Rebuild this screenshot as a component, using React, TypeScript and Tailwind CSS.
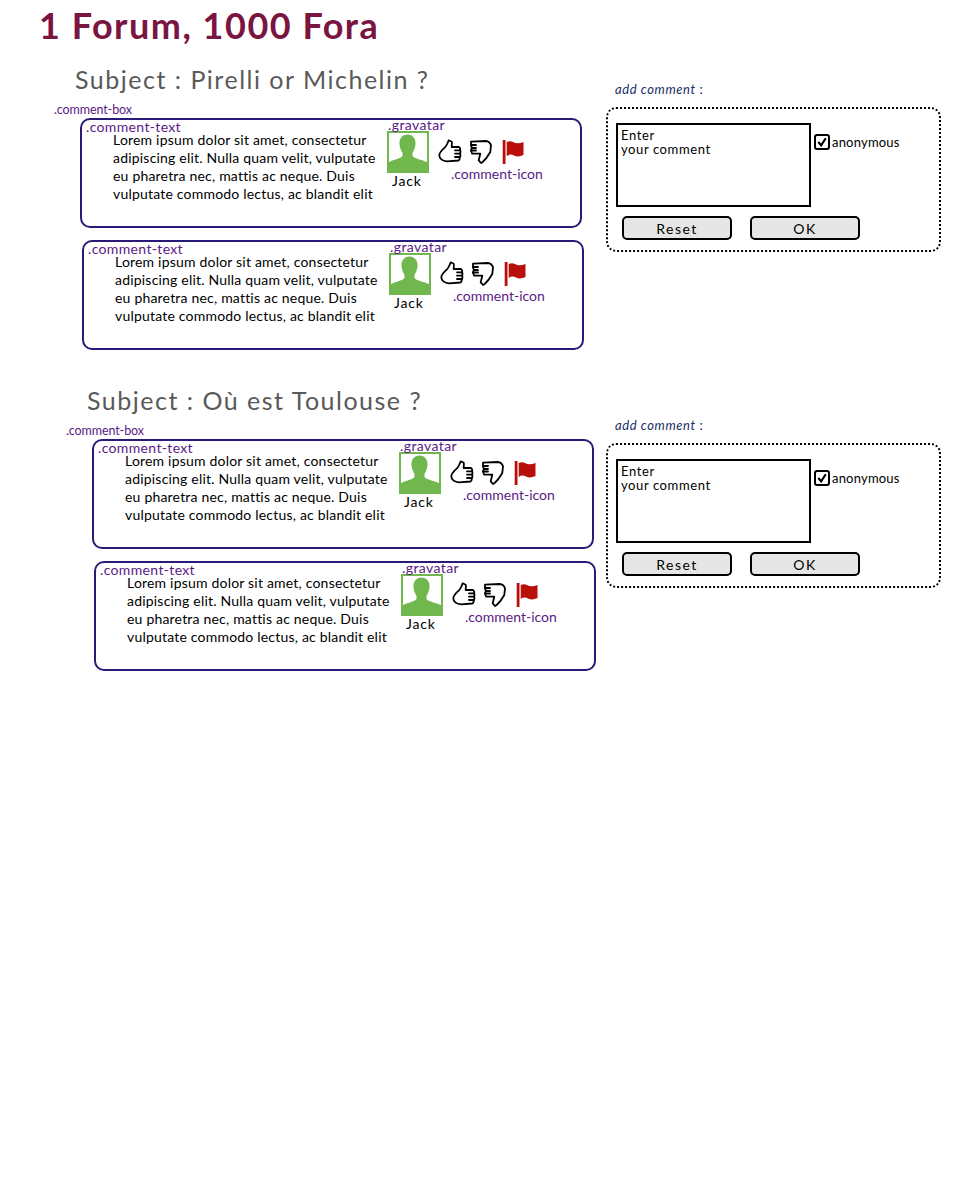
const font = "font-['Lato','Liberation_Sans',sans-serif]";

function ThumbUp() {
  return (
    <svg width="24" height="26" viewBox="0 0 24 26" fill="none" stroke="#000" strokeWidth="1.8" strokeLinejoin="round" strokeLinecap="round">
      <path d="M1.3 16 C1.5 13 5 10 7.3 8 C9 6 10 3.5 10.7 1.3 L13.7 2.7 C14.2 4.5 13.6 6.5 13.7 8 L21 8 Q22.6 9 22 11.3 Q23 13 22 14.6 Q23 16.5 21.8 18 Q22 20.5 20.5 21.5 L9 22.3 C5 22.3 1.2 20 1.3 16 Z" />
      <path d="M17 11.3 L22 11.3 M17 14.6 L22 14.6 M17 18 L21.8 18" />
    </svg>
  );
}

function ThumbDown() {
  return (
    <svg width="24" height="26" viewBox="0 0 24 26" fill="none" stroke="#000" strokeWidth="1.8" strokeLinejoin="round" strokeLinecap="round">
      <path d="M1 2.7 L16 2 C18 2 20.5 4 21 6.3 L20.3 13 C18 17 15 21 12.7 23 L11 24 L8.7 21.3 L10.3 14.7 L2.2 14.7 L1 11.5 L1.8 9 L1 6 Z" />
      <path d="M1 6 L6 6 M1.8 9 L6 9 M1 11.5 L6 11.5" />
    </svg>
  );
}

function Flag() {
  return (
    <svg width="24" height="26" viewBox="0 0 24 26" fill="#b80f0a">
      <rect x="0.7" y="1" width="2.8" height="24" />
      <path d="M4.7 3 Q8 1.5 11 3 Q15 5.5 21.5 3 L21.5 16 Q16 18.5 12 16.5 Q8 14.5 4.7 17 Z" />
    </svg>
  );
}

function Gravatar() {
  return (
    <div className="h-[42px] w-[42px] border-2 border-[#70b84e] bg-white">
      <svg viewBox="0 0 38 38" className="h-full w-full" fill="#70b84e">
        <path d="M18.5 1.5 C24 1.5 27 6 26.5 11 C26 16 24.5 18 23.5 20 L23.5 23 C25 25.5 32 26.5 38 29 L38 38 L0 38 L0 29 C5 26.5 12 25.5 13.5 23 L13.5 20 C12.5 18 11 16 10.5 11 C10 6 13 1.5 18.5 1.5 Z" />
      </svg>
    </div>
  );
}

function Comment({ className }: { className: string }) {
  return (
    <div className={`flex h-[110px] w-[502px] items-start rounded-[10px] border-2 border-[#2a1a78] ${className}`}>
      <div className="w-[305px] pl-[4px]">
        <div className="text-[14px] leading-[13px] tracking-[0.35px] text-[#5a1a86]">.comment-text</div>
        <p className="mt-[-2px] pl-[27px] text-[14px] leading-[18px] tracking-[0.2px] text-black whitespace-nowrap">
          Lorem ipsum dolor sit amet, consectetur
          <br />
          adipiscing elit. Nulla quam velit, vulputate
          <br />
          eu pharetra nec, mattis ac neque. Duis
          <br />
          vulputate commodo lectus, ac blandit elit
        </p>
      </div>
      <div className="mt-[-1px] w-[51px] shrink-0">
        <div className="pl-[1px] text-[14px] leading-[12px] tracking-[0.4px] text-[#5a1a86]">.gravatar</div>
        <Gravatar />
        <div className="pl-[5px] text-[14px] leading-[16px] tracking-[0.8px] text-black">Jack</div>
      </div>
      <div className="mt-[19px]">
        <div className="flex gap-[8px]">
          <ThumbUp />
          <ThumbDown />
          <Flag />
        </div>
        <div className="ml-[13px] mt-[1px] text-[14px] leading-[16px] whitespace-nowrap text-[#5a1a86]">.comment-icon</div>
      </div>
    </div>
  );
}

function AddComment({ className }: { className: string }) {
  return (
    <aside className={`w-[335px] shrink-0 ${className}`}>
      <div className="pl-[9px] text-[13px] leading-[16px] tracking-[0.6px] text-[#1c2f66]">
        <i>add comment</i> :
      </div>
      <div className="mt-[10px] h-[145px] w-[335px] rounded-[10px] border-2 border-dotted border-black pl-[8px] pt-[14px]">
        <div className="flex items-start gap-[3px]">
          <div className="h-[84px] w-[195px] border-2 border-black px-[3px] py-[3px] text-[13px] leading-[14px] tracking-[0.6px] text-black">
            Enter
            <br />
            your comment
          </div>
          <label className="mt-[11px] flex items-center gap-[2px] text-[13px] leading-[16px] tracking-[0.2px] text-black">
            <span className="flex h-[16px] w-[16px] items-center justify-center rounded-[3px] border-2 border-black">
              <svg width="10" height="10" viewBox="0 0 12 12" fill="none" stroke="#000" strokeWidth="2.6">
                <path d="M1.5 6 L5 10 L10.5 1.5" />
              </svg>
            </span>
            anonymous
          </label>
        </div>
        <div className="mt-[9px] flex gap-[18px] pl-[6px]">
          <button className="h-[24px] w-[110px] rounded-[5px] border-2 border-black bg-[#e6e6e6] text-[14px] tracking-[1.5px] text-black">Reset</button>
          <button className="h-[24px] w-[110px] rounded-[5px] border-2 border-black bg-[#e6e6e6] text-[14px] tracking-[1.5px] text-black">OK</button>
        </div>
      </div>
    </aside>
  );
}

function Thread({ subject, className }: { subject: string; className: string }) {
  return (
    <section className={`w-[606px] shrink-0 ${className}`}>
      <h2 className="ml-[21px] text-[25px] leading-[28px] tracking-[1.5px] whitespace-nowrap text-[#595959]">{subject}</h2>
      <div className="mt-[9px] text-[12.5px] leading-[16px] tracking-[-0.1px] text-[#5a1a86]">.comment-box</div>
      <Comment className="ml-[26px]" />
      <Comment className="ml-[28px] mt-[12px]" />
    </section>
  );
}

export default function App() {
  return (
    <div className={`h-[1200px] w-[960px] bg-white ${font}`}>
      <h1 className="pl-[39px] pt-[4px] text-[36px] font-bold leading-[42px] tracking-[1.5px] text-[#7a1440]">1 Forum, 1000 Fora</h1>
      <div className="mt-[19px] flex">
        <Thread subject="Subject : Pirelli or Michelin ?" className="pl-[54px]" />
        <AddComment className="mt-[16px]" />
      </div>
      <div className="mt-[36px] flex">
        <Thread subject="Subject : Où est Toulouse ?" className="pl-[66px]" />
        <AddComment className="mt-[31px]" />
      </div>
    </div>
  );
}
